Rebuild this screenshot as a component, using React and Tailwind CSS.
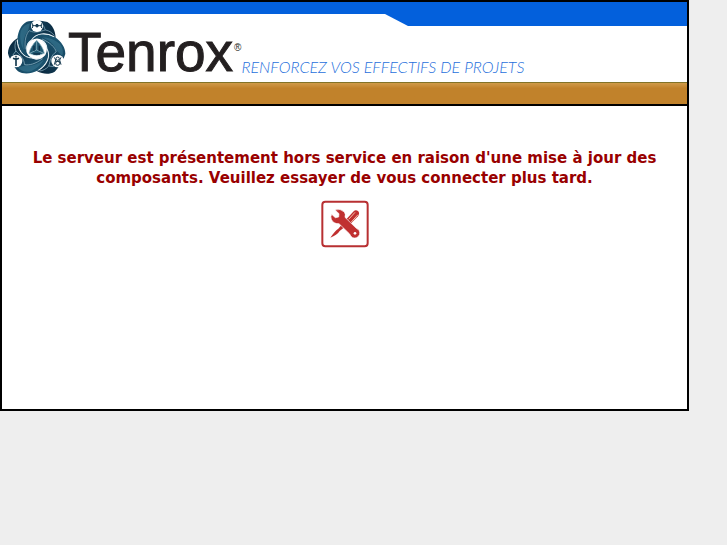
const blades = [0, 120, 240]

function TenroxEmblem() {
    return (
        <svg viewBox="22 60 174 162" className="w-[58px] h-[54px] mb-2 shrink-0" aria-hidden="true">
            <defs>
                <linearGradient id="blade" x1="0" y1="0" x2="1" y2="0">
                    <stop offset="0" stopColor="#1c5672" />
                    <stop offset="0.45" stopColor="#14425c" />
                    <stop offset="1" stopColor="#0a2a40" />
                </linearGradient>
            </defs>
            {blades.map((angle) => (
                <g key={angle} transform={`rotate(${angle} 108 147)`}>
                    <path
                        d="M165 114 C164 92 156 76 140 66 C124 61 94 61 78 65 C62 74 52 92 50 118 C52 146 66 172 92 173 A30 30 0 0 1 93 120 C110 97 142 96 165 114 Z"
                        fill="url(#blade)"
                    />
                    <path
                        d="M60 94 C66 80 76 72 88 70 L82 94 C70 108 66 128 70 150 C60 136 56 112 60 94 Z"
                        fill="#3f8099"
                        opacity="0.5"
                    />
                    <path
                        d="M86 92 C76 102 71 122 74 148 M86 92 C104 101 118 94 134 90 C146 92 156 99 161 107 M134 90 L128 76"
                        fill="none"
                        stroke="#8fb4c4"
                        strokeWidth="2"
                    />
                </g>
            ))}
            {blades.map((angle) => (
                <path
                    key={angle}
                    transform={`rotate(${angle} 108 147)`}
                    d="M50 119 C50 148 66 173 93 174 A30 30 0 0 0 120 174"
                    fill="none"
                    stroke="#e4eff3"
                    strokeWidth="3"
                />
            ))}
            <path d="M108 121 C96 133 88 146 85 160 Q108 171 131 160 C128 146 120 133 108 121 Z" fill="#1d566f" stroke="#8fb8c6" strokeWidth="2" />
            <path d="M108 124 V150 L87 160 M108 150 L129 160" fill="none" stroke="#9fc4d0" strokeWidth="2" />
            <path d="M100 137 V152 M116 137 V152 M98 162 H118" fill="none" stroke="#0d3048" strokeWidth="4" />
            <circle cx="109" cy="78" r="18" fill="#fff" />
            <circle cx="46" cy="183" r="19" fill="#fff" />
            <circle cx="171" cy="183" r="19" fill="#fff" />
            <g fill="none" stroke="#173b50" strokeWidth="3">
                <circle cx="109" cy="77" r="4" fill="#173b50" />
                <path d="M94 77 H124 M95 70 Q99 77 95 84 M123 70 Q119 77 123 84" />
                <path d="M37 175 L46 178 L55 175 M46 174 V198" strokeWidth="5" />
                <circle cx="46" cy="170" r="2" />
                <circle cx="171" cy="176" r="5" />
                <circle cx="171" cy="190" r="6" />
                <path d="M161 172 L165 180 L161 194 M181 172 L177 180 L181 194 M164 184 H178" />
            </g>
        </svg>
    )
}

function ToolsIcon() {
    return (
        <svg viewBox="0 0 144 144" className="w-12 h-12" role="img" aria-label="Maintenance">
            <rect x="4" y="5" width="136" height="134" rx="9" fill="#fff" stroke="#b83032" strokeWidth="6" />
            <path
                d="M76 58 L98 34 Q104 28 112 34 Q117 42 111 49 L88 72 Z"
                fill="#c03030"
            />
            <path d="M83 58 L102 37 M91 66 L111 44" stroke="#f3c0a8" strokeWidth="3" />
            <path d="M62 74 L52 86 Q42 92 28 113 Q48 106 56 93 L70 82 Z" fill="#c03030" />
            <path
                d="M42 30 Q58 24 70 36 Q75 43 72 52 L106 85 Q118 90 116 103 Q109 118 95 113 Q88 109 86 102 L54 71 Q37 72 31 58 Q28 49 32 43 L43 53 L53 51 L54 41 Z"
                fill="#c03030"
                stroke="#fff"
                strokeWidth="2"
            />
            <circle cx="102" cy="100" r="4" fill="#fff" />
        </svg>
    )
}

function Header() {
    return (
        <header>
            <div className="h-20">
                <div className="flex h-6">
                    <div className="h-3 w-[383px] shrink bg-[#0360dc]" />
                    <svg viewBox="0 0 23 24" className="w-[23px] h-6 shrink-0" aria-hidden="true">
                        <path d="M0 0 H23 V24 L0 12 Z" fill="#0360dc" />
                    </svg>
                    <div className="h-6 flex-1 bg-[#0360dc]" />
                </div>
                <div className="flex items-end h-16 -mt-2 pl-1.5">
                    <TenroxEmblem />
                    <h1 className="flex items-start pl-[2px] font-['Liberation_Sans',Arial,sans-serif] text-[55px] leading-[60px] text-[#231f20] [-webkit-text-stroke:1px_#231f20]">
                        Tenrox
                        <sup className="top-0 pl-px text-[10px] leading-[52px] [-webkit-text-stroke:0px]">®</sup>
                    </h1>
                    <p className="mb-[7px] whitespace-nowrap font-['Lato',sans-serif] text-base leading-4 font-light italic text-[#1f6fdc]">
                        RENFORCEZ VOS EFFECTIFS DE PROJETS
                    </p>
                </div>
            </div>
            <div className="h-6 border-t border-b-2 border-t-[#827328] border-b-black bg-linear-to-b from-[#d09a48] to-[#c1822b] to-25%" />
        </header>
    )
}

export default function App() {
    return (
        <div className="min-h-screen bg-[#eeeeee] pr-[38px]">
            <div className="bg-white border-2 border-black pb-[161px]">
                <Header />
                <main className="flex flex-col items-center gap-3 px-5 pt-[42px]">
                    <p className="text-center font-['DejaVu_Sans',Verdana,sans-serif] text-[15px] leading-5 font-bold text-[#990000]">
                        Le serveur est présentement hors service en raison d'une mise à jour des composants. Veuillez essayer de vous connecter plus tard.
                    </p>
                    <ToolsIcon />
                </main>
            </div>
        </div>
    )
}
